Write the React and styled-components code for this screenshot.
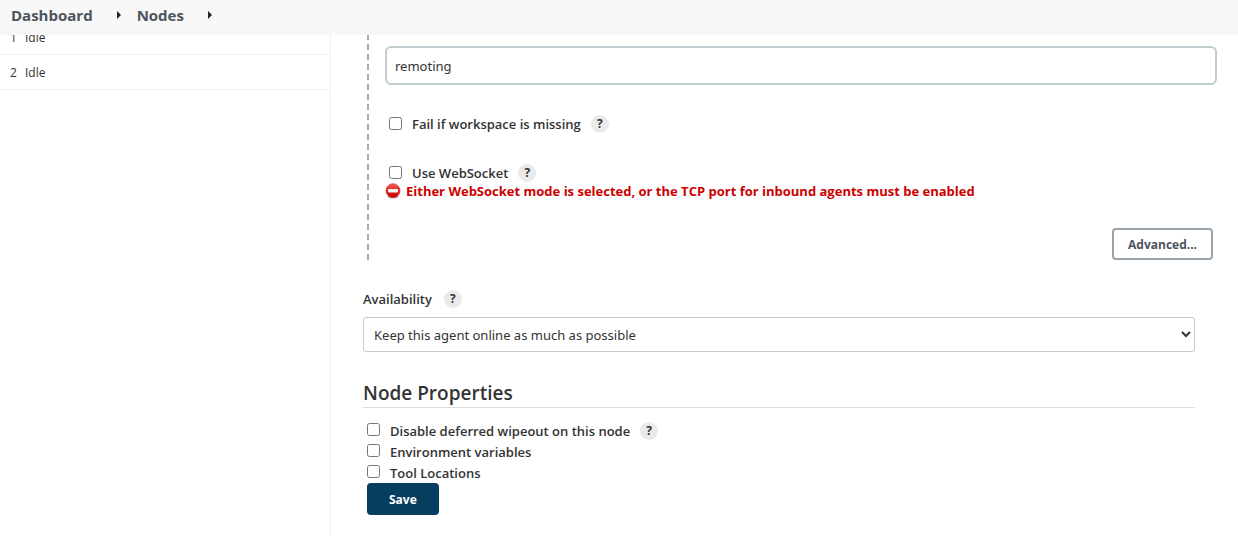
import React from "react";
import styled, { createGlobalStyle } from "styled-components";

const GlobalStyle = createGlobalStyle`
  *, *::before, *::after { box-sizing: border-box; }
  body {
    margin: 0;
    background: #fff;
    color: #333;
    font: 13px/18px "Open Sans", "Noto Sans", sans-serif;
  }
`;

const Page = styled.div`
  display: flex;
  flex-direction: column;
  height: 100vh;
  overflow: hidden;
`;

const Breadcrumbs = styled.nav`
  display: flex;
  align-items: center;
  flex: none;
  height: 35px;
  padding: 0 11px 5px;
  background: #f8f8f8;
`;

const Crumb = styled.a`
  color: #4d545d;
  font-size: 15px;
  font-weight: 700;
  text-decoration: none;
`;

const Arrow = styled.svg`
  width: 4px;
  height: 8px;
  margin: 0 16px 0 24px;
  fill: #222;
`;

const Body = styled.div`
  display: flex;
  flex: 1;
  min-height: 0;
  overflow: hidden;
`;

const Sidebar = styled.aside`
  flex: none;
  width: 331px;
  border-right: 1px solid #f0f0f0;
`;

const Executors = styled.table`
  width: 100%;
  margin-top: -15px;
  border-collapse: separate;
  border-spacing: 0;
  font-size: 12px;

  td {
    height: 35px;
    padding: 2px 0 0;
    border-bottom: 1px solid #f0f0f0;
  }
  td:first-child {
    width: 25px;
    padding-left: 10px;
  }
`;

const Main = styled.main`
  flex: 1;
  min-width: 0;
  padding: 0 43px 0 32px;
`;

const Launcher = styled.section`
  margin: -21px -22px 0 4px;
  padding: 32px 0 0 16px;
  border-left: 2px dashed #aaa;
`;

const TextInput = styled.input`
  display: block;
  width: 100%;
  height: 39px;
  margin-bottom: 30px;
  padding: 0 8px;
  border: 2px solid #c0cccf;
  border-radius: 6px;
  background: #fff;
  color: #333;
  font: 13px/18px "Noto Sans", sans-serif;
`;

const Option = styled.div`
  display: flex;
  align-items: center;
  height: ${(p) => (p.$compact ? 21 : 18)}px;
  padding-left: 4px;
  margin-bottom: ${(p) => p.$gap || 0}px;
`;

const OptionLabel = styled.label`
  display: flex;
  align-items: center;
  font-weight: 600;
`;

const Checkbox = styled.input`
  width: 13px;
  height: 13px;
  margin: 0 10px 2px 0;
`;

const HelpButton = styled.button`
  width: 18px;
  height: 18px;
  margin: 0 0 0 ${(p) => p.$space || 10}px;
  padding: 0;
  border: 0;
  border-radius: 50%;
  background: #eaeaea;
  color: #333;
  font: 700 12px/18px "Open Sans", sans-serif;
  text-align: center;
`;

const ErrorMessage = styled.div`
  display: flex;
  align-items: center;
  gap: 5px;
  color: #c00;
  font-weight: 700;

  svg { flex: none; width: 16px; height: 16px; }
`;

const Actions = styled.div`
  display: flex;
  justify-content: ${(p) => (p.$end ? "flex-end" : "flex-start")};
  padding: ${(p) => (p.$end ? "28px 4px 0" : "0 4px")};
`;

const Button = styled.button`
  height: 32px;
  padding: 2px ${(p) => (p.$primary ? 20 : 14)}px 0;
  border: 2px solid ${(p) => (p.$primary ? "#063e60" : "#98a4ae")};
  border-radius: 4px;
  background: ${(p) => (p.$primary ? "#063e60" : "#fff")};
  color: ${(p) => (p.$primary ? "#fff" : "#4d545d")};
  font: 700 12px/18px "Open Sans", sans-serif;
`;

const Field = styled.div`
  margin-top: 30px;
`;

const FieldHead = styled.div`
  display: flex;
  align-items: center;
  margin-bottom: 9px;
  font-weight: 600;
`;

const Select = styled.select`
  display: block;
  width: 100%;
  height: 35px;
  padding: 0 6px;
  border: 1px solid #c0cccf;
  border-radius: 3px;
  background: #fff;
  color: #333;
  font: 13px/18px "Noto Sans", sans-serif;
`;

const Heading = styled.h2`
  margin: 27px 0 12px;
  border-bottom: 1px solid #ddd;
  font-size: 19px;
  line-height: 28px;
  font-weight: 600;
`;

const Separator = () => (
  <Arrow viewBox="0 0 4 8" aria-hidden="true">
    <path d="M0 0L4 4L0 8Z" />
  </Arrow>
);

const ErrorIcon = () => (
  <svg viewBox="0 0 16 16" aria-hidden="true">
    <defs>
      <linearGradient id="stop" x1="0" y1="0" x2="0" y2="1">
        <stop offset="0" stopColor="#f8675c" />
        <stop offset=".5" stopColor="#df1d18" />
        <stop offset="1" stopColor="#bd0505" />
      </linearGradient>
    </defs>
    <ellipse cx="8" cy="14" rx="6" ry="1.5" fill="#999" opacity=".6" />
    <circle cx="8" cy="7.7" r="7" fill="url(#stop)" stroke="#d3261f" strokeWidth=".6" />
    <rect x="3" y="6" width="10" height="3.4" rx=".8" fill="#f5f3f3" />
  </svg>
);

const Help = ({ topic, space }) => (
  <HelpButton type="button" $space={space} aria-label={`Help for ${topic}`}>?</HelpButton>
);

const CheckOption = ({ id, label, help, compact, gap }) => (
  <Option $compact={compact} $gap={gap}>
    <OptionLabel htmlFor={id}>
      <Checkbox type="checkbox" id={id} />
      {label}
    </OptionLabel>
    {help && <Help topic={label} />}
  </Option>
);

export default function App() {
  return (
    <>
      <GlobalStyle />
      <Page>
        <Breadcrumbs aria-label="Breadcrumb">
          <Crumb href="#dashboard">Dashboard</Crumb>
          <Separator />
          <Crumb href="#nodes">Nodes</Crumb>
          <Separator />
        </Breadcrumbs>
        <Body>
          <Sidebar>
            <Executors>
              <tbody>
                <tr><td>1</td><td>Idle</td></tr>
                <tr><td>2</td><td>Idle</td></tr>
              </tbody>
            </Executors>
          </Sidebar>
          <Main>
            <Launcher>
              <TextInput type="text" aria-label="Internal data directory" defaultValue="remoting" />
              <CheckOption id="workspace" label="Fail if workspace is missing" help gap={31} />
              <CheckOption id="websocket" label="Use WebSocket" help />
              <ErrorMessage role="alert">
                <ErrorIcon />
                Either WebSocket mode is selected, or the TCP port for inbound agents must be enabled
              </ErrorMessage>
              <Actions $end>
                <Button type="button">Advanced...</Button>
              </Actions>
            </Launcher>
            <Field>
              <FieldHead>
                <label htmlFor="availability">Availability</label>
                <Help topic="Availability" space={12} />
              </FieldHead>
              <Select id="availability">
                <option>Keep this agent online as much as possible</option>
              </Select>
            </Field>
            <Heading>Node Properties</Heading>
            <CheckOption compact id="wipeout" label="Disable deferred wipeout on this node" help />
            <CheckOption compact id="env" label="Environment variables" />
            <CheckOption compact id="tools" label="Tool Locations" />
            <Actions>
              <Button type="submit" $primary>Save</Button>
            </Actions>
          </Main>
        </Body>
      </Page>
    </>
  );
}
